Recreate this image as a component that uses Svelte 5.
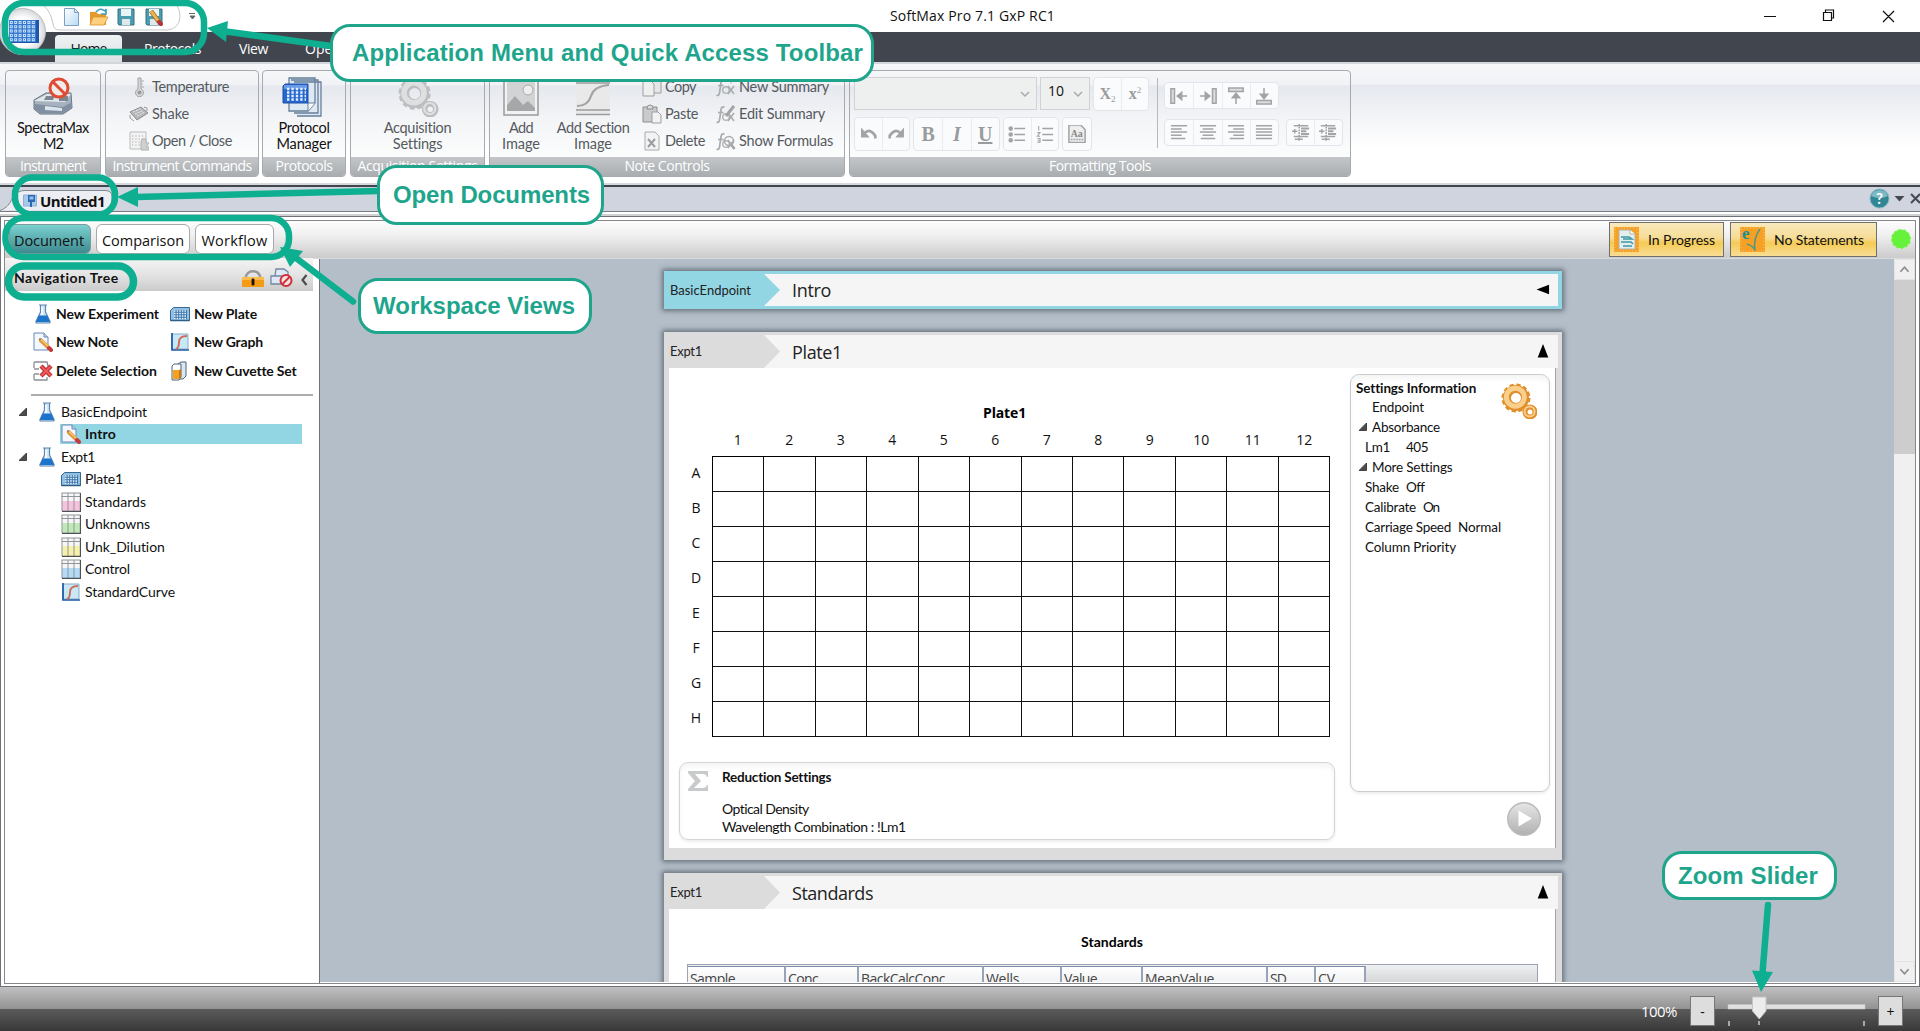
<script>
  // Tracks a label so that it takes up exactly the given width.
  function fit(node, width) {
    const n = node.textContent.length;
    const natural = node.getBoundingClientRect().width;
    node.style.letterSpacing = `${(width - natural) / n}px`;
  }

  const cols = [1, 2, 3, 4, 5, 6, 7, 8, 9, 10, 11, 12];
  const rows = ['A', 'B', 'C', 'D', 'E', 'F', 'G', 'H'];
  const actions = [
    ['flask', 'New Experiment', 103], ['plate', 'New Plate', 63],
    ['note', 'New Note', 62], ['graph', 'New Graph', 69],
    ['delsel', 'Delete Selection', 101], ['cuvette', 'New Cuvette Set', 102]
  ];
  const tree = [
    { icon: 'flask', text: 'BasicEndpoint', w: 86, root: true },
    { icon: 'note', text: 'Intro', w: 31, sel: true },
    { icon: 'flask', text: 'Expt1', w: 34, root: true },
    { icon: 'plate', text: 'Plate1', w: 38 },
    { icon: 'table', tint: '#f6c3de', text: 'Standards', w: 61 },
    { icon: 'table', tint: '#c2e8b8', text: 'Unknowns', w: 65 },
    { icon: 'table', tint: '#f6f0a8', text: 'Unk_Dilution', w: 80 },
    { icon: 'table', tint: '#b4daf5', text: 'Control', w: 45 },
    { icon: 'graph', text: 'StandardCurve', w: 90 }
  ];
  const columns = [
    ['Sample', 98, 45], ['Conc', 73, 30], ['BackCalcConc', 125, 84], ['Wells', 78, 33],
    ['Value', 81, 33], ['MeanValue', 125, 69], ['SD', 48, 16], ['CV', 50, 17]
  ];
</script>

{#snippet gear(light, dark)}
  <circle cx="15" cy="15" r="9" fill="none" stroke={dark} stroke-width="8" />
  <circle cx="15" cy="15" r="13" fill="none" stroke={dark} stroke-width="3" stroke-dasharray="4.2 2.6" />
  <circle cx="14.4" cy="14.2" r="9" fill="none" stroke={light} stroke-width="5" />
  <circle cx="29" cy="29" r="5" fill="none" stroke={dark} stroke-width="5" />
  <circle cx="28.6" cy="28.4" r="5" fill="none" stroke={light} stroke-width="2" />
{/snippet}

{#snippet icon(name, tint)}
  {#if name === 'flask'}
    <svg class="i20" viewBox="0 0 20 20"><path d="M6 1h8M7.500 1v7L3 17.500q-.5 1.500 1 1.500h12q1.500 0 1-1.500L12.500 8V1" fill="#cfe6f8" stroke="#5d86ac" stroke-width="1.200" /><path d="M5.700 11.500h8.600l2.700 6.500H3z" fill="#1c74cc" /><path d="M9 3v8" stroke="#fff" stroke-width="1.500" /></svg>
  {:else if name === 'plate'}
    <svg class="i20" viewBox="0 0 20 20"><path d="M3.500 3.500h16v13H.5v-10z" fill="#8fc0e6" stroke="#39688f" /><path d="M4 6h13v9H4z" fill="#3973a8" /><path d="M4 7h13M4 9.500h13M4 12h13M4 14.500h13" stroke="#e8f6ff" stroke-width="1.600" stroke-dasharray="1.600 1" /><path d="M.5 16.500h19" stroke="#2d5c84" stroke-width="1.500" /></svg>
  {:else if name === 'note'}
    <svg class="i20" viewBox="0 0 20 20"><path d="M1 1h10l4 4v13H1z" fill="#f3f8ff" stroke="#6c88b5" /><path d="M11 1v4h4" fill="#bcd0ea" stroke="#6c88b5" /><path d="M7 7.500l8.500 8" stroke="#e2953a" stroke-width="4" /><path d="M7.500 7l8.500 8" stroke="#f8ca7c" stroke-width="1.300" /><path d="M6 6.500l2.500 0-2 2z" fill="#6b4a2a" /><path d="M16 16l2 2" stroke="#c43b3f" stroke-width="4" stroke-linecap="round" /></svg>
  {:else if name === 'graph'}
    <svg class="i20" viewBox="0 0 20 20"><path d="M2 2h16v15H2z" fill="#c9e8f7" stroke="#8cabc4" /><path d="M2 1v17h17" fill="none" stroke="#1d5aa5" stroke-width="1.700" /><path d="M6 17q3-1 3-7t8-6" fill="none" stroke="#ce6b55" stroke-width="1.900" /></svg>
  {:else if name === 'delsel'}
    <svg class="i20" viewBox="0 0 20 20"><path d="M1 7V2q0-1 1-1h12l1 4M1 8h5M1 13h5M1 13v5q0 1 1 1h12v-3" fill="none" stroke="#8b8f94" stroke-width="1.300" /><path d="M8 5l10 10M18 5L8 15" stroke="#c12d33" stroke-width="4.400" /><path d="M8.500 5.500l9 9M17.500 5.500l-9 9" stroke="#ee5a58" stroke-width="2" /></svg>
  {:else if name === 'cuvette'}
    <svg class="i20" viewBox="0 0 20 20"><path d="M8 3l3-2h5v14l-3 3H8z" fill="#dce6ee" stroke="#4c6376" /><path d="M2 5l2-2h7v13l-2 3H2z" fill="#fff" stroke="#4c6376" /><path d="M3 9h6v9H3z" fill="#f5a11d" /><path d="M9 9l2-1v8l-2 2z" fill="#c87a10" /></svg>
  {:else if name === 'table'}
    <svg class="i20" viewBox="0 0 20 20"><path d="M.5.5h19v19H.5z" fill="#f7f6f7" /><path d="M1 9h18v10H1z" fill={tint} /><path d="M.5 4.500h19M.5 1h19M7 1v18M13 1v18M1 1v18" stroke="#8f979c" /><path d="M1 19.500h18.500V1" fill="none" stroke="#4c5256" stroke-width="1.300" /></svg>
  {:else if name === 'thermo'}
    <svg class="i20" viewBox="0 0 20 20"><path d="M9 1h3v11a4 4 0 1 1-3 0z" fill="#d5d6d7" stroke="#a2a4a5" /><path d="M12 4h3M12 7h2M12 10h3" stroke="#aaa" /><circle cx="10.500" cy="15.500" r="2" fill="#999" /></svg>
  {:else if name === 'shake'}
    <svg class="i20" viewBox="0 0 20 20"><path d="M1 8l11-5 7 6-11 7z" fill="#b5b6b7" stroke="#8d8f90" /><path d="M4 8l8-3.500M6 10l8-3.500M8 12l8-4" stroke="#ececec" stroke-dasharray="2 1" /><path d="M1 11v3l4 3M15 3l3 1v3" fill="none" stroke="#999" /></svg>
  {:else if name === 'open'}
    <svg class="i20" viewBox="0 0 20 20"><path d="M1 1h16v17H1z" fill="#f3f3f3" stroke="#b9bbbc" /><path d="M3 5h12M3 8h12M3 11h9M3 14h9" stroke="#c4c4c4" stroke-width="1.300" stroke-dasharray="1.300 2" /><path d="M13 8h4v4h3l-3 4h3v3h-8v-7z" fill="#cfd0d1" stroke="#b0b2b3" /></svg>
  {:else if name === 'copy'}
    <svg class="i20" viewBox="0 0 20 20"><path d="M8 1h6l5 4v11H8z" fill="#e5e6e7" stroke="#9c9ea0" /><path d="M1 3h7l4 4v12H1z" fill="#efeff0" stroke="#9c9ea0" /></svg>
  {:else if name === 'paste'}
    <svg class="i20" viewBox="0 0 20 20"><path d="M1 3h14v15H1z" fill="#c9cacc" stroke="#8c8e90" /><path d="M5 4q0-3 3-3t3 3v1H5z" fill="#ddd" stroke="#8c8e90" /><path d="M10 8h6l3 3v8h-9z" fill="#f2f2f2" stroke="#9c9ea0" /></svg>
  {:else if name === 'delete'}
    <svg class="i20" viewBox="0 0 20 20"><path d="M3 1h10l4 4v14H3z" fill="#f3f3f4" stroke="#a8aaac" /><path d="M6 8l7 8M13 8l-7 8" stroke="#9b9da0" stroke-width="2" /></svg>
  {:else}
    <svg class="i20" viewBox="0 0 20 20">
      <path d="M8.500 3q-3-1-3.500 3L3.500 16q-.5 3-3 2.300M2 8.500h5.500" fill="none" stroke="#a9abad" stroke-width="1.700" />
      <circle cx="10" cy="13" r="3.300" fill="none" stroke="#b3b5b7" stroke-width="1.500" /><path d="M12 9l6 8M18 9l-6 8" stroke="#a9abad" stroke-width="1.500" />
      {#if name === 'fxnew'}<path d="M15 1v6M12 4h6" stroke="#bbb" />{:else if name === 'fxedit'}<path d="M10 12l8-10" stroke="#a2a4a6" stroke-width="3" />{:else}<circle cx="13" cy="10" r="4.500" fill="none" stroke="#a9abad" stroke-width="1.500" /><path d="M15.500 14l3 4" stroke="#a2a4a6" stroke-width="2.500" />{/if}
    </svg>
  {/if}
{/snippet}

{#snippet head(tag, tw, title, w, dir)}
  <div class="tag"><span use:fit={tw}>{tag}</span></div>
  <svg class="chev" viewBox="0 0 16 32" preserveAspectRatio="none"><path d="M0 0L16 16L0 32z" /></svg>
  <div class="ttl"><span use:fit={w}>{title}</span></div>
  {#if dir === 'left'}
    <svg class="dir" viewBox="0 0 14 14"><path d="M0 7L13.500 2v10z" /></svg>
  {:else}
    <svg class="dir" viewBox="0 0 14 14"><path d="M7 0l5.300 13.500H1.700z" /></svg>
  {/if}
{/snippet}

<div class="app">
  <header class="title">
    <svg class="quick" viewBox="0 0 210 62">
      <defs>
        <linearGradient id="pg" x1="0" y1="0" x2="1" y2="1"><stop offset="0" stop-color="#fff" /><stop offset="1" stop-color="#b9dcf5" /></linearGradient>
        <radialGradient id="orb"><stop offset=".6" stop-color="#fff" /><stop offset="1" stop-color="#d5d7da" /></radialGradient>
      </defs>
      <path d="M0 32h210v30H0z" fill="#41464e" />
      <path d="M44 6q7 6 9 18 1 6 6 6h108q12-1 13-13 0-9-5-13" fill="#fff" stroke="#c4c6c9" />
      <circle cx="22.500" cy="31.500" r="23" fill="url(#orb)" stroke="#b9bcc0" />
      <path d="M9 20h30v23H9z" fill="#1f55ad" /><path d="M9 20h27v22H9z" fill="#3577cc" />
      <g fill="none" stroke="#c4e2ff" stroke-width="3" stroke-dasharray="3 1.400">{#each [22.500, 26.800, 31.100, 35.400, 39.700] as y}<path d={`M9.800 ${y}h26`} />{/each}</g>
      <g stroke="#2a66bb" stroke-width="1" stroke-dasharray="1 3.400">{#each [22.500, 26.800, 31.100, 35.400, 39.700] as y}<path d={`M10.800 ${y}h25`} />{/each}</g>
      <path d="M64.500 8.500h10l4 4v13h-14z" fill="url(#pg)" stroke="#7c9fc4" /><path d="M74.500 8.500v4h4" fill="none" stroke="#7c9fc4" />
      <path d="M90 12h6l2 2h8v11H90z" fill="#e79a2c" /><path d="M93 17h15l-4 8H90z" fill="#fcd07c" stroke="#dc922c" stroke-width=".8" /><path d="M96 12q4-5 9-1l1-2v5h-5" fill="none" stroke="#3d9fc0" stroke-width="1.600" />
      {#each [118, 146] as x}
        <path d={`M${x} 9h16v16h-15l-1-1z`} fill="#4a9db0" stroke="#39707f" /><path d={`M${x + 3} 9h10v7h-10z`} fill="#e8f4f6" /><path d={`M${x + 4} 19h8v6h-8z`} fill="#dfe9ec" />
      {/each}
      <path d="M151 11l8 11" stroke="#8a5a20" stroke-width="4.600" /><path d="M151 11l8 11" stroke="#efb24b" stroke-width="3.200" /><path d="M159 22l2 2" stroke="#b7303a" stroke-width="4" stroke-linecap="round" />
      <path d="M189 13.500h6M190 16h5l-2.500 3z" stroke="#666" fill="#666" />
    </svg>
    <span class="name"><span use:fit={165}>SoftMax Pro 7.1 GxP RC1</span></span>
    <svg class="win" viewBox="0 0 150 32"><path d="M0 16.500h12M59.500 12.500h8v8h-8zM61.500 12v-2h8v8h-2M119 11l11 11M130 11l-11 11" fill="none" stroke="#111" stroke-width="1.200" /></svg>
  </header>

  <nav class="tabs">
    <span class="tab on"><span use:fit={36}>Home</span></span>
    <span class="tab t2"><span use:fit={57}>Protocols</span></span>
    <span class="tab t3"><span use:fit={29}>View</span></span>
    <span class="tab t4">Operations</span>
  </nav>

  <section class="ribbon">
    <div class="grp g1">
      <div class="body big">
        <svg class="i44" viewBox="0 0 44 40"><path d="M3 23l12-7h25l1 15-9 6H9l-6-5z" fill="#a7b2bf" stroke="#66727f" /><path d="M3 24l13-7h24l-6 8z" fill="#e2e7ec" /><path d="M15 19h9l-2 4h-9zM28 19h9v5h-9z" fill="#7c8792" /><path d="M4 27l28 3 9-5v6l-9 5H9l-5-4z" fill="#8090a2" /><path d="M14 29l17 2v3l-17-1z" fill="#dce5ee" /><circle cx="28" cy="11" r="9" fill="#f1ebe9" stroke="#de4c33" stroke-width="3" /><path d="M22 5l12 12" stroke="#de4c33" stroke-width="3" /></svg>
        <span use:fit={72}>SpectraMax</span><span use:fit={20}>M2</span>
      </div>
      <div class="cap"><span use:fit={66}>Instrument</span></div>
    </div>
    <div class="grp g2 dis">
      <div class="body list">
        <div>{@render icon('thermo')}<span use:fit={77}>Temperature</span></div>
        <div>{@render icon('shake')}<span use:fit={37}>Shake</span></div>
        <div>{@render icon('open')}<span use:fit={80}>Open / Close</span></div>
      </div>
      <div class="cap"><span use:fit={139}>Instrument Commands</span></div>
    </div>
    <div class="grp g3">
      <div class="body big">
        <svg class="i44" viewBox="0 0 44 40"><path d="M12 5h27v34H15M9 3h27v33H12M7 1h26v25l-7 8H7z" fill="#dfe9f3" stroke="#667f99" stroke-width="1.300" /><path d="M26 34v-8h7" fill="#fff" stroke="#667f99" /><path d="M3 7h23v19H1V9z" fill="#2768cf" stroke="#1c4fa6" /><path d="M2 8h23v4H2z" fill="#6a9be6" /><g stroke="#e2efff" stroke-width="2.400" stroke-dasharray="2.400 2">{#each [12, 15.500, 19, 22.500] as y}<path d={`M5 ${y}h19`} />{/each}</g></svg>
        <span use:fit={51}>Protocol</span><span use:fit={55}>Manager</span>
      </div>
      <div class="cap"><span use:fit={57}>Protocols</span></div>
    </div>
    <div class="grp g4 dis">
      <div class="body big">
        <svg class="i44" viewBox="0 0 36 36">{@render gear('#dedfe1', '#bdbec0')}</svg>
        <span use:fit={68}>Acquisition</span><span use:fit={49}>Settings</span>
      </div>
      <div class="cap"><span use:fit={120}>Acquisition Settings</span></div>
    </div>
    <div class="grp g5 dis">
      <div class="body note">
        <div class="big n1">
          <svg class="i44" viewBox="0 0 44 40"><path d="M5 1h34v37H5z" fill="#f2f2f2" stroke="#999b9d" stroke-width="1.500" /><path d="M8 4h28v30H8z" fill="#d2d3d5" /><circle cx="29" cy="13" r="5" fill="#eee" stroke="#aaa" /><path d="M8 34V28l8-9 8 9 5-4 7 7v3z" fill="#a5a7a9" /></svg>
          <span use:fit={24}>Add</span><span use:fit={38}>Image</span>
        </div>
        <div class="big n2">
          <svg class="i44" viewBox="0 0 44 40"><path d="M5 2h34v36H5z" fill="#e9e9ea" /><path d="M5 2h34M5 6h34M5 33h34M5 37.500h34" stroke="#9a9c9e" stroke-width="1.500" /><path d="M6 29q11 0 14-10t18-11" fill="none" stroke="#a2a4a6" stroke-width="2.200" /></svg>
          <span use:fit={73}>Add Section</span><span use:fit={38}>Image</span>
        </div>
        <div class="list l1">
          <div>{@render icon('copy')}<span use:fit={31}>Copy</span></div>
          <div>{@render icon('paste')}<span use:fit={33}>Paste</span></div>
          <div>{@render icon('delete')}<span use:fit={40}>Delete</span></div>
        </div>
        <div class="list l2">
          <div>{@render icon('fxnew')}<span use:fit={90}>New Summary</span></div>
          <div>{@render icon('fxedit')}<span use:fit={86}>Edit Summary</span></div>
          <div>{@render icon('fxshow')}<span use:fit={94}>Show Formulas</span></div>
        </div>
      </div>
      <div class="cap"><span use:fit={85}>Note Controls</span></div>
    </div>
    <div class="grp g6">
      <div class="body fmt">
        <div class="left">
          <div class="line">
            <div class="sel s1"><svg viewBox="0 0 10 10"><path d="M1 3l4 4 4-4" /></svg></div>
            <div class="sel s2"><span>10</span><svg viewBox="0 0 10 10"><path d="M1 3l4 4 4-4" /></svg></div>
            <div class="box"><i class="xs">X<small class="lo">2</small></i><i class="xs">x<small class="hi">2</small></i></div>
          </div>
          <div class="line">
            <div class="box"><i><svg viewBox="0 0 20 20"><path d="M5 9q6-6 12 3v3" fill="none" stroke-width="3" /><path d="M2 5v8h7z" /></svg></i><i><svg viewBox="0 0 20 20"><path d="M15 9q-6-6-12 3v3" fill="none" stroke-width="3" /><path d="M18 5v8h-7z" /></svg></i></div>
            <div class="box w28"><i class="ser">B</i><i class="ser it">I</i><i class="ser un">U</i></div>
            <div class="box"><i><svg viewBox="0 0 20 20"><path d="M7 4h12M7 10.500h12M7 17h12" /><circle cx="3" cy="4" r="1.700" /><circle cx="3" cy="10.500" r="1.700" /><circle cx="3" cy="17" r="1.700" /></svg></i><i><svg viewBox="0 0 20 20"><path d="M7 4h12M7 10.500h12M7 17h12" /><path d="M3 1v5M1.500 8.500h3l-3 4h3M1.500 15h3v4h-3M2 17h2" fill="none" stroke-width="1.200" /></svg></i></div>
            <div class="box aa"><i><svg viewBox="0 0 20 20"><path d="M1 0h13l5 5v14.500H1z" fill="#eee" /><text x="3" y="13">Aa</text><path d="M3 16h14" stroke-dasharray="2 1" /></svg></i></div>
          </div>
        </div>
        <div class="right">
          <div class="box low w28">
            <i><svg viewBox="0 0 20 20"><path d="M1 2h4v16H1zM8 10h11" fill="#ddd" /><path d="M8 10l5-4v8z" /></svg></i>
            <i><svg viewBox="0 0 20 20"><path d="M15 2h4v16h-4zM12 10H1" fill="#ddd" /><path d="M12 10L7 6v8z" /></svg></i>
            <i><svg viewBox="0 0 20 20"><path d="M2 1h16v4H2zM10 8v11" fill="#ddd" /><path d="M10 7l4 5H6z" /></svg></i>
            <i><svg viewBox="0 0 20 20"><path d="M2 15h16v4H2zM10 12V1" fill="#ddd" /><path d="M10 13l4-5H6z" /></svg></i>
          </div>
          <div class="line">
            <div class="box low w28">
              <i><svg viewBox="0 0 20 20"><path d="M1 2h18M1 5.500h12M1 9h18M1 12.500h12M1 16h16" /></svg></i>
              <i><svg viewBox="0 0 20 20"><path d="M1 2h18M4 5.500h12M1 9h18M4 12.500h12M2 16h16" /></svg></i>
              <i><svg viewBox="0 0 20 20"><path d="M1 2h18M7 5.500h12M1 9h18M7 12.500h12M3 16h16" /></svg></i>
              <i><svg viewBox="0 0 20 20"><path d="M1 2h18M1 5.500h18M1 9h18M1 12.500h18M1 16h18" /></svg></i>
            </div>
            <div class="box low ind">
              {#each [0, 1] as n}
                <i><svg viewBox="0 0 20 20"><path d="M2 2h16" /><path d="M10 5h9M10 8h6M10 11h9" stroke-width="2.200" /><path d="M2 14h16M3 17h9M0 8h6M3 5.500v5" /><path d="M8 0v19" stroke-dasharray="2 1" /></svg></i>
              {/each}
            </div>
          </div>
        </div>
      </div>
      <div class="cap"><span use:fit={102}>Formatting Tools</span></div>
    </div>
  </section>

  <div class="docs">
    <svg class="shape" viewBox="0 0 114 24"><path d="M0 23.500Q8 21 12 12T26 3.500h79q7 0 7 6v14" fill="#eceef3" stroke="#85898f" /><path d="M23.500 8h13v11h-13z" fill="#a9c9ea" stroke="#8fb0d6" /><path d="M28 8h7v7h-7zM30 15h2v5h-2z" fill="#2c69b5" /><path d="M29.500 9.500h4v3h-4z" fill="#8fc0ee" /></svg>
    <b><span use:fit={65}>Untitled1</span></b>
    <svg class="help" viewBox="0 0 54 24"><circle cx="11.500" cy="11.500" r="9.500" fill="#318696" stroke="#8ab8c1" /><path d="M3 9a9 9 0 0 1 17 0q-8 4-17 0" fill="#7dbac5" /><text x="11.500" y="17">?</text><path d="M26.500 9h10l-5 5.500z" fill="#444a52" /><path d="M43 7l9 9M52 7l-9 9" stroke="#444a52" stroke-width="2" /></svg>
  </div>

  <div class="frame"><div class="inner">
    <div class="views">
      <span class="view act"><span use:fit={70}>Document</span></span>
      <span class="view v2"><span use:fit={82}>Comparison</span></span>
      <span class="view v3"><span use:fit={66}>Workflow</span></span>
      <div class="status s-a"><svg viewBox="0 0 25 25"><path d="M0 0h25v25H0z" fill="#f6a026" /><path d="M1 1h23v23H1z" fill="none" stroke="#fac36a" stroke-dasharray="1 2" /><path d="M5 3h11l5 4v15H5z" fill="#e5eeee" stroke="#b3b6a5" /><path d="M16 3v4h5" fill="#fff" stroke="#b3b6a5" /><path d="M7 10h8l3 2H9M7 15h10l2 2M9 19h9" fill="none" stroke="#3b98a5" stroke-width="1.500" /></svg><span use:fit={67}>In Progress</span></div>
      <div class="status s-b"><svg viewBox="0 0 25 25"><path d="M0 0h25v25H0z" fill="#f6a026" /><path d="M1 1h23v23H1z" fill="none" stroke="#fac36a" stroke-dasharray="1 2" /><text x="2" y="12">e</text><path d="M20 2q-7 9-5 22M7 17q6 2 8 6" fill="none" stroke="#4b9a86" stroke-width="1.500" /></svg><span use:fit={90}>No Statements</span></div>
      <i class="dot"></i>
    </div>

    <div class="main">
      <aside>
        <div class="navhead">
          <b><span use:fit={105}>Navigation Tree</span></b>
          <svg viewBox="0 0 70 22"><path d="M4 11V9a7.500 7.500 0 0 1 14 0v2" fill="none" stroke="#98999c" stroke-width="2.500" /><path d="M0 10h22v10H0z" fill="#f49c16" /><path d="M0 10h22v3H0z" fill="#fcbc4c" /><path d="M10 12h2v6h-2z" stroke="#3c2508" /><path d="M33 9l1-7h8l4 3v4M29 9h16v8H29z" fill="#dfe9f5" stroke="#7088a2" stroke-width="1.300" /><circle cx="44" cy="13.500" r="5.500" fill="#f6e4e4" stroke="#d03038" stroke-width="2" /><path d="M40.500 17l7-7" stroke="#d03038" stroke-width="2" /><path d="M64.500 8l-4 5 4 5" fill="none" stroke="#4a4d52" stroke-width="2.200" /></svg>
        </div>
        <div class="acts">
          {#each actions as [ic, text, w]}
            <div>{@render icon(ic)}<b><span use:fit={w}>{text}</span></b></div>
          {/each}
        </div>
        <div class="rule"></div>
        <div class="tree">
          {#each tree as t}
            <div class={['node', t.root && 'root', t.sel && 'sel-node']}>
              {#if t.root}<svg class="tri" viewBox="0 0 9 9"><path d="M8.500 0v8.500H0z" /></svg>{/if}
              {@render icon(t.icon, t.tint)}
              <span use:fit={t.w}>{t.text}</span>
            </div>
          {/each}
        </div>
      </aside>

      <div class="work">
        <article class="card intro"><div class="hd">{@render head('BasicEndpoint', 81, 'Intro', 39, 'left')}</div></article>

        <article class="card plate">
          <div class="hd">{@render head('Expt1', 32, 'Plate1', 50, 'up')}</div>
          <div class="content">
            <div class="lcol">
              <h3><span use:fit={43}>Plate1</span></h3>
              <div class="nums">{#each cols as c}<span>{c}</span>{/each}</div>
              <div class="gridrow">
                <div class="lets">{#each rows as r}<span>{r}</span>{/each}</div>
                <div class="grid">{#each rows as r}{#each cols as c}<i></i>{/each}{/each}</div>
              </div>
              <div class="reduce">
                <svg viewBox="0 0 20 20"><path d="M0 0h20v6h-1q-1-3-4-3H7l6 7-7 7h9q3 0 4-3h1v6H0v-2l7-8-7-8z" fill="#c9cacb" /></svg>
                <div><b><span use:fit={109}>Reduction Settings</span></b><p><span use:fit={87}>Optical Density</span></p><p><span use:fit={184}>Wavelength Combination : !Lm1</span></p></div>
              </div>
            </div>
            <div class="rcol">
              <div class="info">
                <svg class="gears" viewBox="0 0 36 36">{@render gear('#f9cf8c', '#e18f2d')}</svg>
                <b><span use:fit={120}>Settings Information</span></b>
                <p class="in"><span use:fit={52}>Endpoint</span></p>
                <p><svg class="tri" viewBox="0 0 9 9"><path d="M8.500 0v8.500H0z" /></svg><span use:fit={68}>Absorbance</span></p>
                <p class="kv"><span use:fit={25}>Lm1</span><span class="far" use:fit={22}>405</span></p>
                <p><svg class="tri" viewBox="0 0 9 9"><path d="M8.500 0v8.500H0z" /></svg><span use:fit={80}>More Settings</span></p>
                <p class="kv"><span use:fit={34}>Shake</span><span use:fit={18}>Off</span></p>
                <p class="kv"><span use:fit={51}>Calibrate</span><span use:fit={16}>On</span></p>
                <p class="kv"><span use:fit={86}>Carriage Speed</span><span use:fit={43}>Normal</span></p>
                <p class="kv"><span use:fit={91}>Column Priority</span></p>
              </div>
              <svg class="play" viewBox="0 0 34 36"><defs><linearGradient id="pl" x1="0" y1="0" x2="0" y2="1"><stop offset="0" stop-color="#e6e6e6" /><stop offset="1" stop-color="#b0b0b0" /></linearGradient></defs><circle cx="17" cy="18" r="16.200" fill="url(#pl)" stroke="#bababa" stroke-width="1.500" /><path d="M11.500 9.500L25 17.500 11.500 25.500z" fill="#fff" /></svg>
            </div>
          </div>
        </article>

        <article class="card std">
          <div class="hd">{@render head('Expt1', 32, 'Standards', 81, 'up')}</div>
          <div class="content">
            <h3><span use:fit={62}>Standards</span></h3>
            <div class="thead">
              {#each columns as [t, w, tw]}<span class="th" style:width={`${w}px`}><span use:fit={tw}>{t}</span></span>{/each}
            </div>
          </div>
        </article>
      </div>

      <div class="scroll"><svg viewBox="0 0 21 21"><path d="M6 13l4.500-5 4.500 5" /></svg><i></i><svg viewBox="0 0 21 21"><path d="M6 8l4.500 5L15 8" /></svg></div>
    </div>
  </div></div>

  <footer>
    <span class="pct"><span use:fit={36}>100%</span></span>
    <span class="zb">-</span>
    <svg class="slide" viewBox="0 0 141 44"><path d="M2 17.500h137v4.500H2z" fill="#e0e0e0" stroke="#c9c9c9" stroke-width=".5" /><path d="M26.500 10h13.500v14l-6.700 8-6.800-8z" fill="#ececec" stroke="#c5c5c5" /><path d="M3 34v5M33 34v4M138 34v5" stroke="#ddd" stroke-width="1.300" /></svg>
    <span class="zb">+</span>
  </footer>

  <svg class="marks" viewBox="0 0 1920 1031">
    <g class="ring">
      <rect x="5" y="3" width="199" height="49" rx="19" />
      <rect x="15" y="177.500" width="100" height="37" rx="17" />
      <rect x="5.500" y="218" width="283.500" height="39" rx="18" />
      <rect x="8.500" y="266" width="125" height="31" rx="15.500" stroke-width="7.500" />
    </g>
    <g class="stem"><path d="M226 31.500L331 46" /><path d="M136 197L378 191" /><path d="M296 258L353 301.500" /><path d="M1768 905L1762.500 973" /></g>
    <g class="tip"><path d="M207 28L228 21 226 42z" /><path d="M117 197L138 187v20z" /><path d="M280 247L303 251 290 267z" /><path d="M1761 992L1752 970.500 1773 972z" /></g>
  </svg>
  <div class="callout c1"><span use:fit={511}>Application Menu and Quick Access Toolbar</span></div>
  <div class="callout c2"><span use:fit={197}>Open Documents</span></div>
  <div class="callout c3"><span use:fit={202}>Workspace Views</span></div>
  <div class="callout c4"><span use:fit={140}>Zoom Slider</span></div>
</div>

<style>
  :global(body) { overflow: hidden; }
  .app { position: relative; width: 1920px; height: 1031px; overflow: hidden; display: flex; flex-direction: column; background: #fff; font-family: Lato, 'Open Sans', sans-serif; font-size: 14px; color: #111; box-sizing: border-box; }
  .app * { box-sizing: border-box; }
  span { white-space: pre; display: inline-block; }
  svg { display: block; flex: none; }
  i { font-style: normal; }
  p, h3 { margin: 0; }
  .i20 { width: 20px; height: 20px; }
  .i44 { width: 44px; height: 40px; }

  .title { height: 32px; display: flex; flex: none; }
  .quick { width: 210px; height: 62px; position: relative; z-index: 2; }
  .name { margin-left: 680px; line-height: 32px; font-family: 'Open Sans', sans-serif; font-size: 14px; }
  .win { width: 150px; height: 32px; margin: 0 6px 0 auto; }
  .tabs { height: 30px; flex: none; background: #41464e; display: flex; align-items: flex-end; color: #fff; font-family: 'Open Sans', sans-serif; font-size: 14px; }
  .tab { line-height: 27px; height: 27px; }
  .on { margin-left: 55px; width: 67px; background: linear-gradient(#eef2f3, #dde1e4); border-radius: 4px 4px 0 0; color: #111; text-align: center; position: relative; z-index: 3; }
  .t2 { margin-left: 22px; width: 57px; position: relative; z-index: 3; }
  .t3 { margin-left: 38px; width: 29px; }
  .t4 { margin-left: 37px; }

  .ribbon { height: 123px; flex: none; border-top: 2px solid #d2d5d9; border-bottom: 2px solid #d7dadd; padding: 6px 5px; display: flex; background: linear-gradient(#f6f7f9, #f1f2f6 20px, #e5e8ef 21px, #f4f5f8 55px, #fff 85px); }
  .grp { height: 107px; border: 1px solid #a7abb0; border-radius: 4px; overflow: hidden; display: flex; flex-direction: column; margin-right: 4px; flex: none; background: linear-gradient(#f6f7f9, #f1f2f5 14px, #e5e8ee 15px, #f4f5f7 50px, #fbfcfc 86px); line-height: 16px; font-size: 14.500px; }
  .g1 { width: 96px; } .g2 { width: 154px; margin-right: 3px; } .g3 { width: 84px; } .g4 { width: 135px; } .g5 { width: 356px; } .g6 { width: 502px; margin-right: 0; }
  .dis { color: #555a5f; }
  .body { height: 86px; flex: none; }
  .cap { flex: 1; background: linear-gradient(#c3c7ca, #a9adb0); color: #fff; text-align: center; line-height: 18px; font-size: 14px; font-family: 'Open Sans', sans-serif; }
  .big { display: flex; flex-direction: column; align-items: center; padding-top: 6px; }
  .big svg { margin-bottom: 3px; }
  .list { padding: 2px 0 0 23px; }
  .list div { display: flex; align-items: center; gap: 3px; height: 27.300px; }
  .note { display: flex; }
  .n1 { width: 62px; } .n2 { width: 82px; }
  .note .l1 { padding-left: 8px; width: 82px; } .note .l2 { padding-left: 0; }
  .fmt { display: flex; padding: 6px 0 0 4px; }
  .left { width: 304px; border-right: 1px solid #b7babd; height: 70px; margin-top: 1px; }
  .left .line { margin-top: -1px; height: 41px; }
  .line { display: flex; gap: 3px; align-items: flex-start; }
  .sel { height: 33px; border: 1px solid #d0d2d4; background: #eeefef; display: flex; align-items: center; justify-content: flex-end; padding-right: 6px; font-family: 'Open Sans', sans-serif; font-size: 14px; }
  .sel svg { width: 10px; height: 10px; fill: none; stroke: #aaa; stroke-width: 1.500; }
  .sel span { margin-top: -6px; }
  .s1 { width: 183px; } .s2 { width: 50px; justify-content: space-between; padding-left: 7px; }
  .box { display: flex; height: 34px; border: 1px solid #e2e5e9; border-radius: 4px; background: #fafbfc; }
  .box i { width: 27px; display: flex; align-items: center; justify-content: center; border-left: 1px solid #eaecef; color: #999b9d; }
  .box i:first-child { border-left: 0; }
  .box svg { width: 18px; height: 18px; fill: #a2a4a6; stroke: #a2a4a6; stroke-width: 1.700; }
  .w28 i { width: 28.300px; }
  .box.aa i { width: 28px; }
  .aa text { font: bold 11px 'Liberation Serif', serif; stroke: none; fill: #888; }
  .box .xs { font: bold 16px 'Liberation Serif', serif; }
  .xs small { font-size: 9px; font-weight: normal; }
  .lo { padding-top: 9px; }
  .hi { padding-bottom: 8px; }
  .ser { font: bold 20px 'Liberation Serif', serif; }
  .box .it { font-style: italic; } .un { text-decoration: underline; }
  .right { padding: 5px 0 0 6px; }
  .low { height: 27px; margin-bottom: 10px; width: 115px; }
  .right .line { gap: 7px; }
  .low.ind { width: 57px; }

  .docs { height: 27px; margin-bottom: 4px; flex: none; position: relative; z-index: 1; border-top: 2px solid #41464e; border-bottom: 1px solid #777a80; background: #d0d4df; display: flex; box-shadow: 0 2px 0 #fff; }
  .shape { width: 114px; height: 24px; margin-right: -74px; }
  .docs b { line-height: 28px; position: relative; font-size: 15px; font-family: 'Open Sans', sans-serif; }
  .help { width: 54px; height: 24px; margin-left: auto; margin-right: -2px; }
  .help text { font: bold 15px Lato, sans-serif; fill: #fff; text-anchor: middle; }
  .frame { height: 771px; flex: none; border: 1px solid #6e7177; padding: 3px 3px 2px; background: #fff; box-shadow: 0 -2px 0 #d0d1d3; }
  .inner { height: 764px; border: 1px solid #85878b; display: flex; flex-direction: column; }
  .views { height: 38px; flex: none; display: flex; background: linear-gradient(#fdfdfd, #efefef 40%, #cbcbcb); padding-top: 3px; border-bottom: 1px solid #d8dadb; }
  .view { height: 30px; border: 1px solid #a9a9a9; border-radius: 6px; background: #fff; text-align: center; line-height: 31px; font-family: 'Open Sans', sans-serif; font-size: 14.500px; }
  .act { margin-left: 4px; width: 82px; background: linear-gradient(#7bd0d0, #3d8b90); border-color: #7d9a9c; }
  .view.act { padding-right: 2px; }
  .v2 { margin-left: 5px; width: 94px; } .v3 { margin-left: 5px; width: 79px; }
  .status { height: 35px; margin-top: -2px; border: 1px solid #6e6f70; background: linear-gradient(#f8e9bd, #f6dc95 45%, #f5cb55 60%, #f9dd95); display: flex; align-items: center; }
  .status svg { width: 25px; height: 25px; }
  .status text { font: bold 17px 'Liberation Serif', serif; fill: #188f9b; }
  .s-a { margin-left: auto; width: 115px; padding-left: 4px; gap: 9px; }
  .s-b { margin-left: 6px; width: 147px; padding-left: 9px; gap: 9px; }
  .dot { width: 20px; height: 20px; border-radius: 50%; background: #66f13b; border: 1px dashed #b8f5a2; margin: 5px 4px 0 14px; }

  .main { height: 724px; display: flex; }
  aside { width: 315px; flex: none; border-right: 1px solid #6e7177; background: #fff; line-height: 20px; }
  .navhead { width: 308px; height: 33px; margin-top: -1px; background: linear-gradient(#f4f4f4, #e4e4e4 50%, #cbcbcb); display: flex; padding-left: 9px; }
  .navhead b { line-height: 39px; width: 228px; position: relative; z-index: 3; }
  .navhead svg { width: 70px; height: 22px; margin-top: 9px; }
  .acts { display: grid; grid-template-columns: 137px 150px; padding: 9px 0 0 28px; grid-auto-rows: 28.300px; }
  .acts div { display: flex; align-items: center; gap: 4px; }
  .acts div:nth-child(odd) { gap: 3px; }
  .acts b, .navhead b { font-size: 14px; }
  .rule { height: 2px; width: 282px; background: #adadad; margin: 9px 0 6px 26px; }
  .node { display: flex; align-items: center; gap: 4px; height: 20px; margin: 0 0 2.500px 55px; width: 242px; padding-left: 1px; }
  .node.root { margin-left: 14px; padding-left: 0; }
  .root .i20 { margin-left: 5px; }
  .tri { width: 8px; height: 8px; fill: #4c4c4c; stroke: #333; }
  .root .tri { margin-right: 1px; }
  .sel-node { background: #92d6e4; font-weight: bold; }

  .work { flex: 1; background: #b3bec8; padding: 12px 0 0 344px; overflow: hidden; height: 723px; }
  .card { width: 898px; background: #dcdcdc; box-shadow: 0 0 5px 2px #66717c; color: #222; }
  .hd { display: flex; align-items: center; height: 36px; padding-top: 3px; padding-right: 4px; }
  .tag { width: 100px; background: #dcdcdc; height: 33px; line-height: 33px; padding-left: 6px; font-size: 13px; }
  .chev { width: 16px; height: 33px; background: #f5f5f5; fill: #dcdcdc; }
  .ttl { flex: 1; background: #f5f5f5; height: 33px; line-height: 34px; padding-left: 12px; font-size: 18px; font-family: 'Open Sans', sans-serif; }
  .dir { width: 38px; height: 33px; padding: 9px 8px 10px 16px; background: #f5f5f5; fill: #000; }
  .intro { height: 38px; background: #92d6e4; margin-bottom: 23px; }
  .intro .hd { height: 35px; }
  .intro .tag { background: #92d6e4; height: 32px; } .intro .chev { fill: #92d6e4; height: 32px; } .intro .ttl, .intro .dir { height: 32px; line-height: 33px; }
  .plate { height: 528px; margin-bottom: 13px; }
  .content { margin: 0 6px 0 5px; background: #fff; border-right: 1px solid #a5a5a5; height: 480px; display: flex; color: #111; }
  .lcol { width: 681px; font-family: 'Open Sans', sans-serif; font-size: 14px; }
  h3 { font-size: 14px; line-height: 20px; color: #000; }
  .lcol h3 { padding: 35px 0 0 314px; }
  .nums { display: grid; grid-template-columns: repeat(12, 51.500px); padding-left: 43px; height: 33px; line-height: 34px; text-align: center; }
  .gridrow { display: flex; }
  .lets { width: 43px; height: 281px; display: grid; grid-template-rows: repeat(8, 35px); line-height: 34px; padding-left: 11px; text-align: center; }
  .grid { width: 618px; height: 281px; display: grid; grid-template-columns: repeat(12, 1fr); grid-template-rows: repeat(8, 1fr); border: solid #000; border-width: 1px 0 0 1px; }
  .grid i { border: solid #111; border-width: 0 1px 1px 0; }
  .reduce { margin: 25px 0 0 10px; width: 656px; height: 78px; border: 1px solid #d4d4d4; border-radius: 9px; display: flex; padding: 7px 8px; gap: 14px; box-shadow: 0 2px 3px #eee, inset 0 4px 5px #f5f5f5; font-family: Lato, sans-serif; line-height: 18px; font-size: 14px; }
  .reduce svg { width: 20px; height: 20px; margin-top: 1px; }
  .reduce b { display: block; height: 30px; line-height: 14px; font-size: 13.500px; }
  .rcol { width: 200px; }
  .info { margin-top: 6px; height: 418px; border: 1px solid #ccc; border-radius: 9px; padding: 3px 5px; box-shadow: 0 2px 3px #eee, inset 0 4px 5px #f5f5f5; line-height: 20px; font-size: 13.500px; }
  .info b { display: block; height: 19px; }
  .gears { width: 36px; height: 36px; float: right; margin: 5px 7px -41px 0; }
  .info p { height: 20px; display: flex; align-items: center; padding-left: 3px; gap: 5px; }
  .info p.in { padding-left: 16px; } .info p.kv { padding-left: 9px; gap: 7px; } .info .far { margin-left: 9px; }
  .play { width: 34px; height: 36px; margin: 9px 0 0 157px; }
  .std .content { display: block; }
  .std h3 { padding: 23px 0 0 412px; height: 44px; }
  .thead { margin: 11px 0 0 18px; width: 851px; height: 60px; border: 1px solid #9ca4b3; background: linear-gradient(#eff0f1, #cfd1d3 20px); display: flex; padding-top: 1px; }
  .th { border-top: 1px solid #7e8da8; border-right: 2px solid #97a3ba; background: linear-gradient(#fff, #ecedef 20px); padding-left: 2px; line-height: 24px; font-size: 14px; color: #444; font-family: 'Open Sans', sans-serif; }
  .scroll { width: 21px; background: #f0f0f0; height: 723px; display: flex; flex-direction: column; }
  .scroll svg { width: 21px; height: 21px; fill: none; stroke: #8b8b8b; stroke-width: 1.800; border: 1px solid #e4e4e4; }
  .scroll i { height: 174px; background: #cdcdcd; margin-bottom: 507px; }

  footer { height: 44px; flex: none; background: linear-gradient(#c0c0c0, #929292 22px, #5b5b5b 22px, #383838); display: flex; align-items: flex-start; padding-left: 1641px; }
  .pct { color: #fff; font: 15px/49px 'Open Sans', sans-serif; width: 49px; }
  .zb { width: 25px; height: 30px; margin-top: 9px; background: #ddd; border: 1px solid #777; text-align: center; font: 14px/29px 'Open Sans', sans-serif; }
  .slide { width: 141px; height: 44px; margin: 0 11px; }

  .marks { position: absolute; inset: 0; width: 1920px; height: 1031px; z-index: 5; pointer-events: none; }
  .ring { fill: none; stroke: #0eae91; stroke-width: 6.500; }
  .stem { fill: none; stroke: #0eae91; stroke-width: 6.500; stroke-linecap: round; }
  .tip { fill: #0eae91; }
  .callout { position: absolute; z-index: 6; background: #fff; border: 3px solid #1ea58c; border-radius: 20px; color: #1ea58c; font: bold 24px 'Liberation Sans', Arial, sans-serif; display: flex; align-items: center; }
  .c1 { left: 330px; top: 24px; width: 544px; height: 58px; padding-left: 19px; }
  .c2 { left: 377px; top: 165px; width: 227px; height: 60px; padding-left: 13px; }
  .c3 { left: 358px; top: 278px; width: 234px; height: 56px; padding-left: 12px; }
  .c4 { left: 1662px; top: 851px; width: 175px; height: 49px; padding-left: 13px; }
</style>
